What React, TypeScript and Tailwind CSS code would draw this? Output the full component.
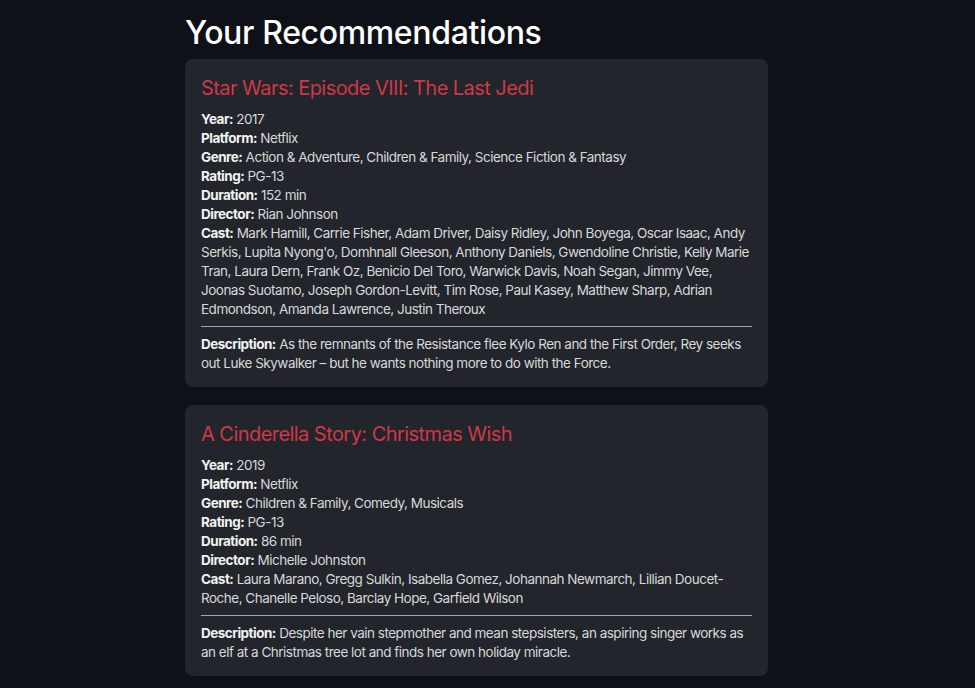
const movies = [
  {
    title: "Star Wars: Episode VIII: The Last Jedi",
    year: "2017",
    platform: "Netflix",
    genre: "Action & Adventure, Children & Family, Science Fiction & Fantasy",
    rating: "PG-13",
    duration: "152 min",
    director: "Rian Johnson",
    cast: "Mark Hamill, Carrie Fisher, Adam Driver, Daisy Ridley, John Boyega, Oscar Isaac, Andy Serkis, Lupita Nyong'o, Domhnall Gleeson, Anthony Daniels, Gwendoline Christie, Kelly Marie Tran, Laura Dern, Frank Oz, Benicio Del Toro, Warwick Davis, Noah Segan, Jimmy Vee, Joonas Suotamo, Joseph Gordon-Levitt, Tim Rose, Paul Kasey, Matthew Sharp, Adrian Edmondson, Amanda Lawrence, Justin Theroux",
    description:
      "As the remnants of the Resistance flee Kylo Ren and the First Order, Rey seeks out Luke Skywalker – but he wants nothing more to do with the Force.",
  },
  {
    title: "A Cinderella Story: Christmas Wish",
    year: "2019",
    platform: "Netflix",
    genre: "Children & Family, Comedy, Musicals",
    rating: "PG-13",
    duration: "86 min",
    director: "Michelle Johnston",
    cast: "Laura Marano, Gregg Sulkin, Isabella Gomez, Johannah Newmarch, Lillian Doucet-Roche, Chanelle Peloso, Barclay Hope, Garfield Wilson",
    description:
      "Despite her vain stepmother and mean stepsisters, an aspiring singer works as an elf at a Christmas tree lot and finds her own holiday miracle.",
  },
];

function Field({ label, value }: { label: string; value: string }) {
  return (
    <p>
      <span className="font-bold text-[#f2f2f2]">{label}:</span> {value}
    </p>
  );
}

export default function App() {
  return (
    <main
      className="min-h-screen bg-[#0e1117] text-[#d8d8d8]"
      style={{ fontFamily: "Inter, 'Noto Sans', sans-serif" }}
    >
      <div className="ml-[185px] w-[583px] pt-[14px] pb-8">
        <h1 className="text-[32px] leading-[38px] font-medium tracking-[-0.35px] text-white mb-[7px]">
          Your Recommendations
        </h1>

        <div className="flex flex-col gap-[18px]">
          {movies.map((m) => (
            <section key={m.title} className="bg-[#22252c] rounded-lg px-4 pt-[17px] pb-[14px]">
              <h2 className="text-[20px] leading-[24px] tracking-[-0.55px] text-[#cf3846] mb-[10px]">
                {m.title}
              </h2>
              <div className="text-[13.5px] leading-[19px] tracking-[-0.5px]">
                <Field label="Year" value={m.year} />
                <Field label="Platform" value={m.platform} />
                <Field label="Genre" value={m.genre} />
                <Field label="Rating" value={m.rating} />
                <Field label="Duration" value={m.duration} />
                <Field label="Director" value={m.director} />
                <Field label="Cast" value={m.cast} />
                <hr className="border-0 h-px bg-[#a0a3a8] mt-[7px] mb-[8px]" />
                <Field label="Description" value={m.description} />
              </div>
            </section>
          ))}
        </div>
      </div>
    </main>
  );
}
